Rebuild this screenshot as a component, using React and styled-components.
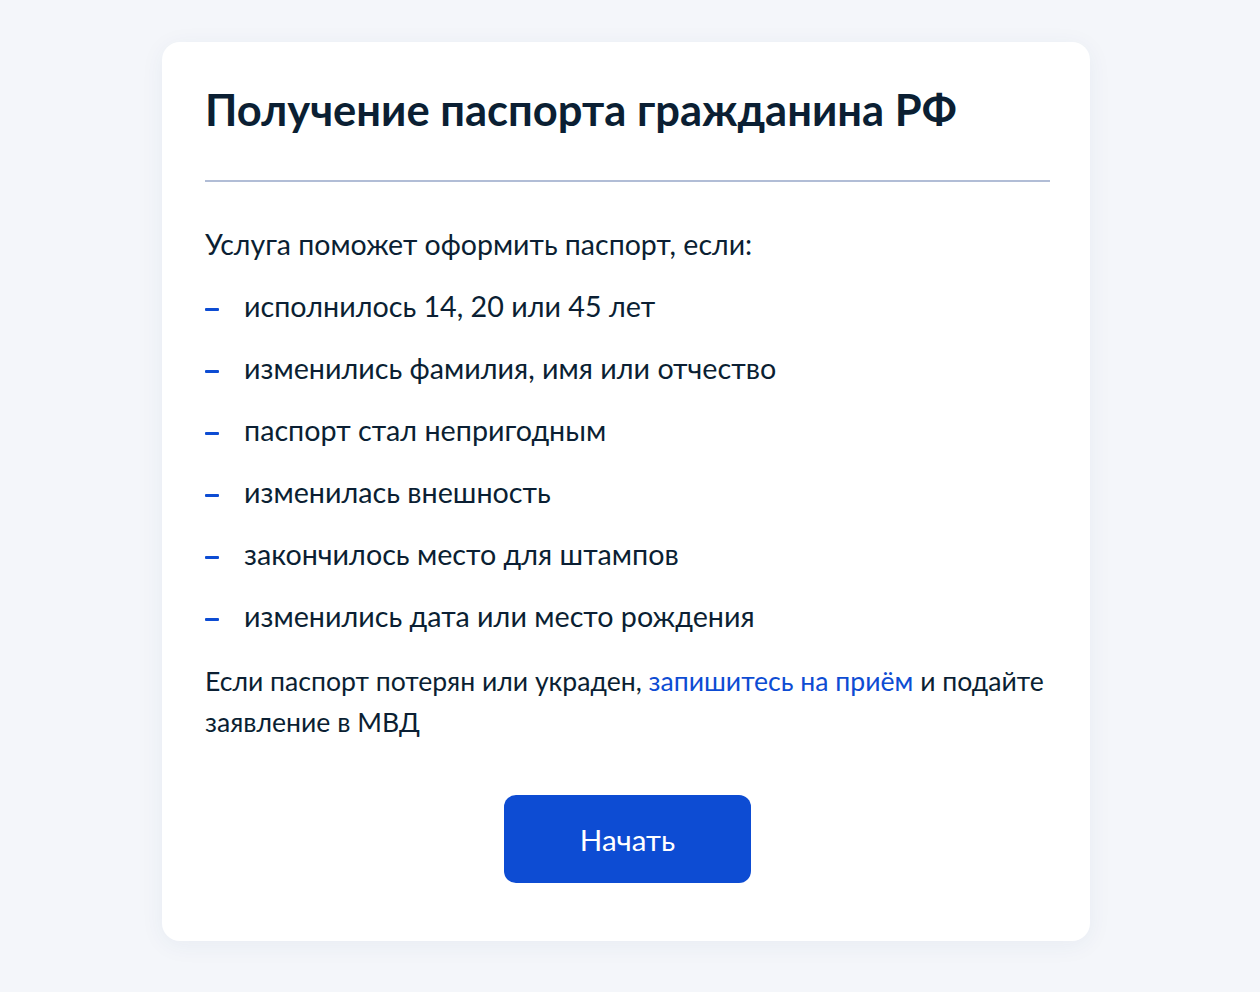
import React from "react";
import styled, { createGlobalStyle } from "styled-components";

const GlobalStyle = createGlobalStyle`
  html, body {
    margin: 0;
    padding: 0;
    background: #f4f6fa;
  }
  body {
    font-family: Lato, "Noto Sans", "Liberation Sans", sans-serif;
    -webkit-font-smoothing: antialiased;
  }
`;

const Page = styled.main`
  min-height: 992px;
  box-sizing: border-box;
  padding: 42px 0 0 162px;
  display: flex;
  align-items: flex-start;
`;

const Card = styled.section`
  width: 928px;
  box-sizing: border-box;
  background: #ffffff;
  border-radius: 18px;
  box-shadow: 0 4px 24px rgba(30, 60, 120, 0.06);
  padding: 41px 40px 58px 43px;
  display: flex;
  flex-direction: column;
`;

const Title = styled.h1`
  margin: 0;
  font-size: 43.5px;
  line-height: 52px;
  font-weight: 700;
  color: #0b1f33;
  white-space: nowrap;
`;

const Divider = styled.hr`
  margin: 45px 0 0;
  border: 0;
  height: 2px;
  background: #b1bdd6;
`;

const Lead = styled.p`
  margin: 42px 0 0;
  font-size: 28.5px;
  line-height: 40px;
  color: #0b1f33;
  white-space: nowrap;
`;

const List = styled.ul`
  margin: 22px 0 0;
  padding: 0;
  list-style: none;
  display: flex;
  flex-direction: column;
  gap: 22px;
`;

const Item = styled.li`
  display: flex;
  align-items: center;
  font-size: 28.7px;
  line-height: 40px;
  color: #0b1f33;
  white-space: nowrap;
`;

const Dash = styled.span`
  flex: none;
  width: 14px;
  height: 3px;
  border-radius: 1px;
  background: #0d4cd3;
  margin: 6px 25px 0 0;
`;

const Note = styled.p`
  margin: 25px 0 0;
  font-size: 26.6px;
  line-height: 41px;
  color: #0b1f33;
`;

const Link = styled.a`
  color: #0d4cd3;
  text-decoration: none;
`;

const Actions = styled.div`
  margin-top: 52px;
  display: flex;
  justify-content: center;
`;

const Button = styled.button`
  width: 247px;
  height: 88px;
  border: 0;
  border-radius: 12px;
  background: #0d4cd3;
  color: #ffffff;
  font-family: inherit;
  font-size: 29.5px;
  cursor: pointer;
`;

const reasons = [
  "исполнилось 14, 20 или 45 лет",
  "изменились фамилия, имя или отчество",
  "паспорт стал непригодным",
  "изменилась внешность",
  "закончилось место для штампов",
  "изменились дата или место рождения",
];

export default function App() {
  return (
    <>
      <GlobalStyle />
      <Page>
        <Card>
          <Title>Получение паспорта гражданина РФ</Title>
          <Divider />
          <Lead>Услуга поможет оформить паспорт, если:</Lead>
          <List>
            {reasons.map((r) => (
              <Item key={r}>
                <Dash />
                {r}
              </Item>
            ))}
          </List>
          <Note>
            Если паспорт потерян или украден,{" "}
            <Link href="#">запишитесь на приём</Link> и подайте заявление в МВД
          </Note>
          <Actions>
            <Button type="button">Начать</Button>
          </Actions>
        </Card>
      </Page>
    </>
  );
}
